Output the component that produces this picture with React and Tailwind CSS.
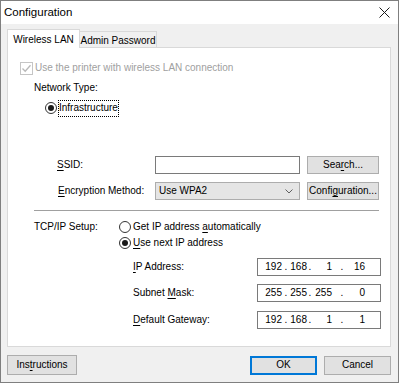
import React from "react";

const U = ({ children }) => (
  <span className="underline decoration-1 underline-offset-[2px]">{children}</span>
);

function Radio({ checked }) {
  return (
    <span className="w-[12px] h-[12px] rounded-full border border-[#333333] bg-white flex items-center justify-center shrink-0">
      {checked && <span className="w-[6px] h-[6px] rounded-full bg-[#1a1a1a]" />}
    </span>
  );
}

function Btn({ children, className = "" }) {
  return (
    <div
      className={
        "bg-[#e1e1e1] border border-[#adadad] flex items-center justify-center text-black " +
        className
      }
    >
      {children}
    </div>
  );
}

function IpField({ parts }) {
  return (
    <div className="w-[124px] h-[18px] border border-[#7a7a7a] bg-white flex items-center">
      <span className="w-[24px] text-right">{parts[0]}</span>
      <span className="w-[8px] text-center">.</span>
      <span className="w-[17px] text-right">{parts[1]}</span>
      <span className="w-[6px] text-center">.</span>
      <span className="w-[19px] text-right">{parts[2]}</span>
      <span className="w-[20px] text-center">.</span>
      <span className="w-[13px] text-right">{parts[3]}</span>
    </div>
  );
}

export default function App() {
  return (
    <div className="w-[399px] h-[383px] border border-[#7f7f7f] bg-[#f0f0f0] flex flex-col font-['Liberation_Sans',Arial,sans-serif] text-[10px] text-black leading-none overflow-hidden">
      {/* Title bar */}
      <div className="h-[23px] bg-white flex items-center justify-between pl-[3px] pr-[8px] shrink-0">
        <span className="text-[11.5px]">Configuration</span>
        <svg width="11" height="11" viewBox="0 0 11 11">
          <path d="M0.5 0.5 L10.5 10.5 M10.5 0.5 L0.5 10.5" stroke="#1a1a1a" strokeWidth="1" />
        </svg>
      </div>

      {/* Body */}
      <div className="flex flex-col pl-[6px] pt-[5px]">
        {/* Tabs */}
        <div className="flex items-end h-[18px]">
          <div className="relative z-10 -mb-px w-[73px] h-[19px] bg-white border border-b-0 border-[#d9d9d9] flex items-center justify-center pt-[2px]">
            Wireless LAN
          </div>
          <div className="w-[77px] h-[16px] bg-[#f0f0f0] border border-l-0 border-b-0 border-[#d9d9d9] flex items-center justify-center pt-[2px]">
            Admin Password
          </div>
        </div>

        {/* Panel */}
        <div className="w-[384px] h-[300px] bg-white border border-[#d9d9d9] flex flex-col">
          {/* Checkbox row */}
          <div className="mt-[13px] h-[14px] ml-[12px] flex items-center gap-[2px]">
            <span className="w-[13px] h-[13px] border border-[#c5c5c5] bg-white flex items-center justify-center shrink-0">
              <svg width="11" height="11" viewBox="0 0 11 11">
                <path d="M1.5 5.5 L4.2 8.3 L9.5 2.2" stroke="#b8b8b8" strokeWidth="1.3" fill="none" />
              </svg>
            </span>
            <span className="text-[#a0a0a0]">Use the printer with wireless LAN connection</span>
          </div>

          {/* Network Type */}
          <div className="mt-[6px] h-[14px] ml-[26px] flex items-center">Network Type:</div>

          {/* Infrastructure */}
          <div className="mt-[6px] h-[14px] ml-[37px] flex items-center">
            <Radio checked />
            <span className="ml-[1px] h-[17px] border border-dotted border-black flex items-center">
              Infrastructure
            </span>
          </div>

          {/* SSID */}
          <div className="mt-[41px] h-[18px] ml-[49px] flex items-center">
            <span className="w-[98px]">
              <U>S</U>SID:
            </span>
            <div className="w-[145px] h-[18px] border border-[#7a7a7a] bg-white" />
            <Btn className="ml-[7px] w-[72px] h-[18px]">
              Sea<U>r</U>ch...
            </Btn>
          </div>

          {/* Encryption */}
          <div className="mt-[8px] h-[18px] ml-[50px] flex items-center">
            <span className="w-[97px]">
              <U>E</U>ncryption Method:
            </span>
            <div className="w-[145px] h-[18px] border border-[#adadad] bg-[#e5e5e5] flex items-center justify-between pl-[3px] pr-[6px]">
              <span>Use WPA2</span>
              <svg width="8" height="5" viewBox="0 0 8 5">
                <path d="M0.5 0.5 L4 4 L7.5 0.5" stroke="#606060" strokeWidth="1" fill="none" />
              </svg>
            </div>
            <Btn className="ml-[7px] w-[72px] h-[18px]">
              Confi<U>g</U>uration...
            </Btn>
          </div>

          {/* Separator */}
          <div className="mt-[10px] ml-[26px] w-[345px] h-px bg-[#a0a0a0]" />

          {/* TCP/IP */}
          <div className="mt-[9px] h-[14px] ml-[26px] flex items-center">
            <span className="w-[85px]">TCP/IP Setup:</span>
            <Radio />
            <span className="ml-[2px]">
              Get IP address <U>a</U>utomatically
            </span>
          </div>
          <div className="mt-[2px] h-[14px] ml-[111px] flex items-center">
            <Radio checked />
            <span className="ml-[2px]">
              <U>U</U>se next IP address
            </span>
          </div>

          {/* IP rows */}
          <div className="mt-[8px] h-[18px] ml-[125px] flex items-center">
            <span className="w-[124px]">
              <U>I</U>P Address:
            </span>
            <IpField parts={["192", "168", "1", "16"]} />
          </div>
          <div className="mt-[8px] h-[18px] ml-[125px] flex items-center">
            <span className="w-[124px]">
              Subnet <U>M</U>ask:
            </span>
            <IpField parts={["255", "255", "255", "0"]} />
          </div>
          <div className="mt-[9px] h-[18px] ml-[125px] flex items-center">
            <span className="w-[124px]">
              <U>D</U>efault Gateway:
            </span>
            <IpField parts={["192", "168", "1", "1"]} />
          </div>
        </div>

        {/* Bottom buttons */}
        <div className="mt-[8px] w-[384px] flex items-center justify-between">
          <Btn className="w-[70px] h-[20px]">
            Ins<U>t</U>ructions
          </Btn>
          <div className="flex gap-[7px]">
            <Btn className="w-[67px] h-[19px] !border-[#0078d7] shadow-[inset_0_0_0_1px_#0078d7]">OK</Btn>
            <Btn className="w-[67px] h-[19px]">Cancel</Btn>
          </div>
        </div>
      </div>
    </div>
  );
}
